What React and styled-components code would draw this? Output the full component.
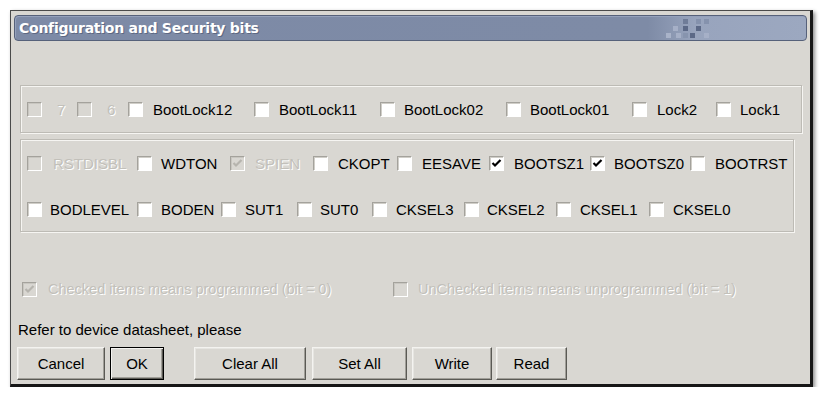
import React from 'react';
import styled, { createGlobalStyle, css } from 'styled-components';

const Global = createGlobalStyle`
  html, body { margin: 0; padding: 0; background: #ffffff; }
  body { font-family: "Liberation Sans", Arial, sans-serif; }
  * { box-sizing: border-box; }
`;

const Page = styled.div`
  padding: 10px 0 0 10px;
`;

const Window = styled.div`
  width: 803px;
  height: 377px;
  background: #d9d7d2;
  border-left: 1px solid #4a4a4a;
  border-top: 1px solid #4a4a4a;
  border-right: 3px solid #161616;
  border-bottom: 3px solid #161616;
  box-shadow: 2px 2px 4px rgba(0, 0, 0, 0.45);
  display: flex;
  flex-direction: column;
`;

const TitleBar = styled.div`
  position: relative;
  margin: 4px 3px 0 3px;
  height: 26px;
  border: 1px solid #56617a;
  border-radius: 4px;
  background: linear-gradient(to right, #7d8aa6 0%, #7e8ba6 80%, #98a4bd 86%, #9ca8c0 100%);
  box-shadow: inset 1px 1px 0 #95a1bb;
  display: flex;
  align-items: center;
  padding-left: 4px;
`;

const Title = styled.span`
  font-family: "DejaVu Sans", Verdana, sans-serif;
  font-weight: bold;
  font-size: 14px;
  letter-spacing: -0.25px;
  color: #ffffff;
  text-shadow: 1px 1px 0 #5d6883;
`;

const Checker = styled.svg`
  position: absolute;
  left: 650px;
  top: 1px;
`;

const Body = styled.div`
  display: flex;
  flex-direction: column;
  padding: 0 8px 0 9px;
`;

const Group = styled.div`
  margin-top: ${p => p.$mt}px;
  width: ${p => p.$w}px;
  border: 1px solid #bdbbb5;
  box-shadow: inset 1px 1px 0 #f6f5f2, 1px 1px 0 #f6f5f2;
  padding: ${p => p.$pad};
  display: flex;
  flex-direction: column;
  gap: 16px;
`;

const Row = styled.div`
  display: flex;
  align-items: center;
  height: 30px;
  padding-left: 6px;
`;

const Item = styled.div`
  display: flex;
  align-items: center;
  flex: none;
  width: ${p => (p.$w ? `${p.$w}px` : 'auto')};
  margin-left: ${p => p.$ml || 0}px;
`;

const Box = styled.span`
  flex: none;
  width: 15px;
  height: 15px;
  display: flex;
  align-items: center;
  justify-content: center;
  background: ${p => (p.$disabled ? '#d9d7d2' : '#ffffff')};
  border-style: solid;
  border-width: 1px;
  border-color: #a4a29c #ffffff #ffffff #a4a29c;
  box-shadow: inset 1px 1px 0 ${p => (p.$disabled ? '#c8c6c0' : '#d0cec8')};
`;

const Label = styled.span`
  margin-left: ${p => p.$off - 15}px;
  font-size: ${p => p.$size || 15}px;
  line-height: 17px;
  white-space: nowrap;
  color: #000000;
  ${p =>
    p.$disabled &&
    css`
      color: #c2c0ba;
      text-shadow: 1px 1px 0 #ffffff;
    `}
`;

const Check = ({ color }) => (
  <svg width="11" height="11" viewBox="0 0 11 11">
    <path d="M1.5 5 L4 7.5 L9.5 2" fill="none" stroke={color} strokeWidth="2.2" />
  </svg>
);

const CheckItem = ({ label, w, ml, off = 24, size, checked, disabled }) => (
  <Item $w={w} $ml={ml}>
    <Box $disabled={disabled}>{checked && <Check color={disabled ? '#b6b4ae' : '#000'} />}</Box>
    <Label $off={off} $size={size} $disabled={disabled}>
      {label}
    </Label>
  </Item>
);

const Legend = styled.div`
  display: flex;
  align-items: center;
  height: 15px;
  margin-top: 50px;
`;

const Note = styled.div`
  margin-top: 24px;
  margin-left: -2px;
  font-size: 15px;
  line-height: 17px;
  color: #000;
`;

const ButtonRow = styled.div`
  display: flex;
  margin-top: 9px;
  margin-left: -3px;
`;

const Button = styled.button`
  flex: none;
  width: ${p => p.$w}px;
  height: 33px;
  margin-left: ${p => p.$ml || 0}px;
  padding: 0;
  font-family: "Liberation Sans", Arial, sans-serif;
  font-size: 15px;
  color: #000;
  background: #d9d7d2;
  border-style: solid;
  border-width: 1px;
  border-color: #f4f3f0 #5a5954 #5a5954 #f4f3f0;
  box-shadow: inset -1px -1px 0 #a09e98, inset 1px 1px 0 #e6e5e1;
  ${p =>
    p.$default &&
    css`
      border: 1px solid #000;
      box-shadow: inset 1px 1px 0 #f4f3f0, inset -1px -1px 0 #5a5954, inset -2px -2px 0 #a09e98;
    `}
`;

const row1 = [
  { label: '7', w: 50, off: 30, disabled: true },
  { label: '6', w: 51, off: 30, disabled: true },
  { label: 'BootLock12', w: 126, off: 25 },
  { label: 'BootLock11', w: 126, off: 25 },
  { label: 'BootLock02', w: 126, off: 24 },
  { label: 'BootLock01', w: 126, off: 24 },
  { label: 'Lock2', w: 84, off: 25 },
  { label: 'Lock1', off: 24 },
];

const row2 = [
  { label: 'RSTDISBL', w: 110, off: 26, disabled: true },
  { label: 'WDTON', w: 93 },
  { label: 'SPIEN', w: 83, off: 25, disabled: true, checked: true },
  { label: 'CKOPT', w: 84, off: 25 },
  { label: 'EESAVE', w: 92, off: 25 },
  { label: 'BOOTSZ1', w: 101, off: 25, checked: true },
  { label: 'BOOTSZ0', w: 100, checked: true },
  { label: 'BOOTRST', off: 25 },
];

const row3 = [
  { label: 'BODLEVEL', w: 110, off: 23 },
  { label: 'BODEN', w: 84 },
  { label: 'SUT1', w: 76 },
  { label: 'SUT0', w: 75, off: 23 },
  { label: 'CKSEL3', w: 92 },
  { label: 'CKSEL2', w: 92, off: 23 },
  { label: 'CKSEL1', w: 93, off: 24 },
  { label: 'CKSEL0', off: 24 },
];

const squares = [
  [15, 0, '#6f7c98'],
  [28, 0, '#8592ad'],
  [36, 0, '#8592ad'],
  [5, 7, '#a6b0c7'],
  [15, 7, '#5c6987'],
  [28, 7, '#5c6987'],
  [-2, 14, '#a9b3c9'],
  [8, 14, '#a6b0c7'],
  [15, 14, '#8794ae'],
  [22, 14, '#5c6987'],
  [36, 14, '#a6b0c7'],
];

export default function App() {
  return (
    <Page>
      <Global />
      <Window>
        <TitleBar>
          <Title>Configuration and Security bits</Title>
          <Checker width="48" height="22" viewBox="-3 -2 48 22">
            {squares.map(([x, y, c], i) => (
              <rect key={i} x={x} y={y} width="5" height="5" fill={c} />
            ))}
          </Checker>
        </TitleBar>
        <Body>
          <Group $mt={44} $w={782} $pad="8px 0 8px 0">
            <Row>
              {row1.map(it => (
                <CheckItem key={it.label} {...it} />
              ))}
            </Row>
          </Group>
          <Group $mt={6} $w={774} $pad="8px 0 7px 0">
            <Row>
              {row2.map(it => (
                <CheckItem key={it.label} {...it} />
              ))}
            </Row>
            <Row>
              {row3.map(it => (
                <CheckItem key={it.label} {...it} />
              ))}
            </Row>
          </Group>
          <Legend>
            <CheckItem label="Checked items means programmed (bit = 0)" w={371} ml={2} off={26} size={14.5} checked disabled />
            <CheckItem label="UnChecked items means unprogrammed (bit = 1)" off={25} size={14.5} disabled />
          </Legend>
          <Note>Refer to device datasheet, please</Note>
          <ButtonRow>
            <Button $w={88}>Cancel</Button>
            <Button $w={54} $ml={5} $default>OK</Button>
            <Button $w={112} $ml={30}>Clear All</Button>
            <Button $w={95} $ml={6}>Set All</Button>
            <Button $w={80} $ml={5}>Write</Button>
            <Button $w={71} $ml={4}>Read</Button>
          </ButtonRow>
        </Body>
      </Window>
    </Page>
  );
}
